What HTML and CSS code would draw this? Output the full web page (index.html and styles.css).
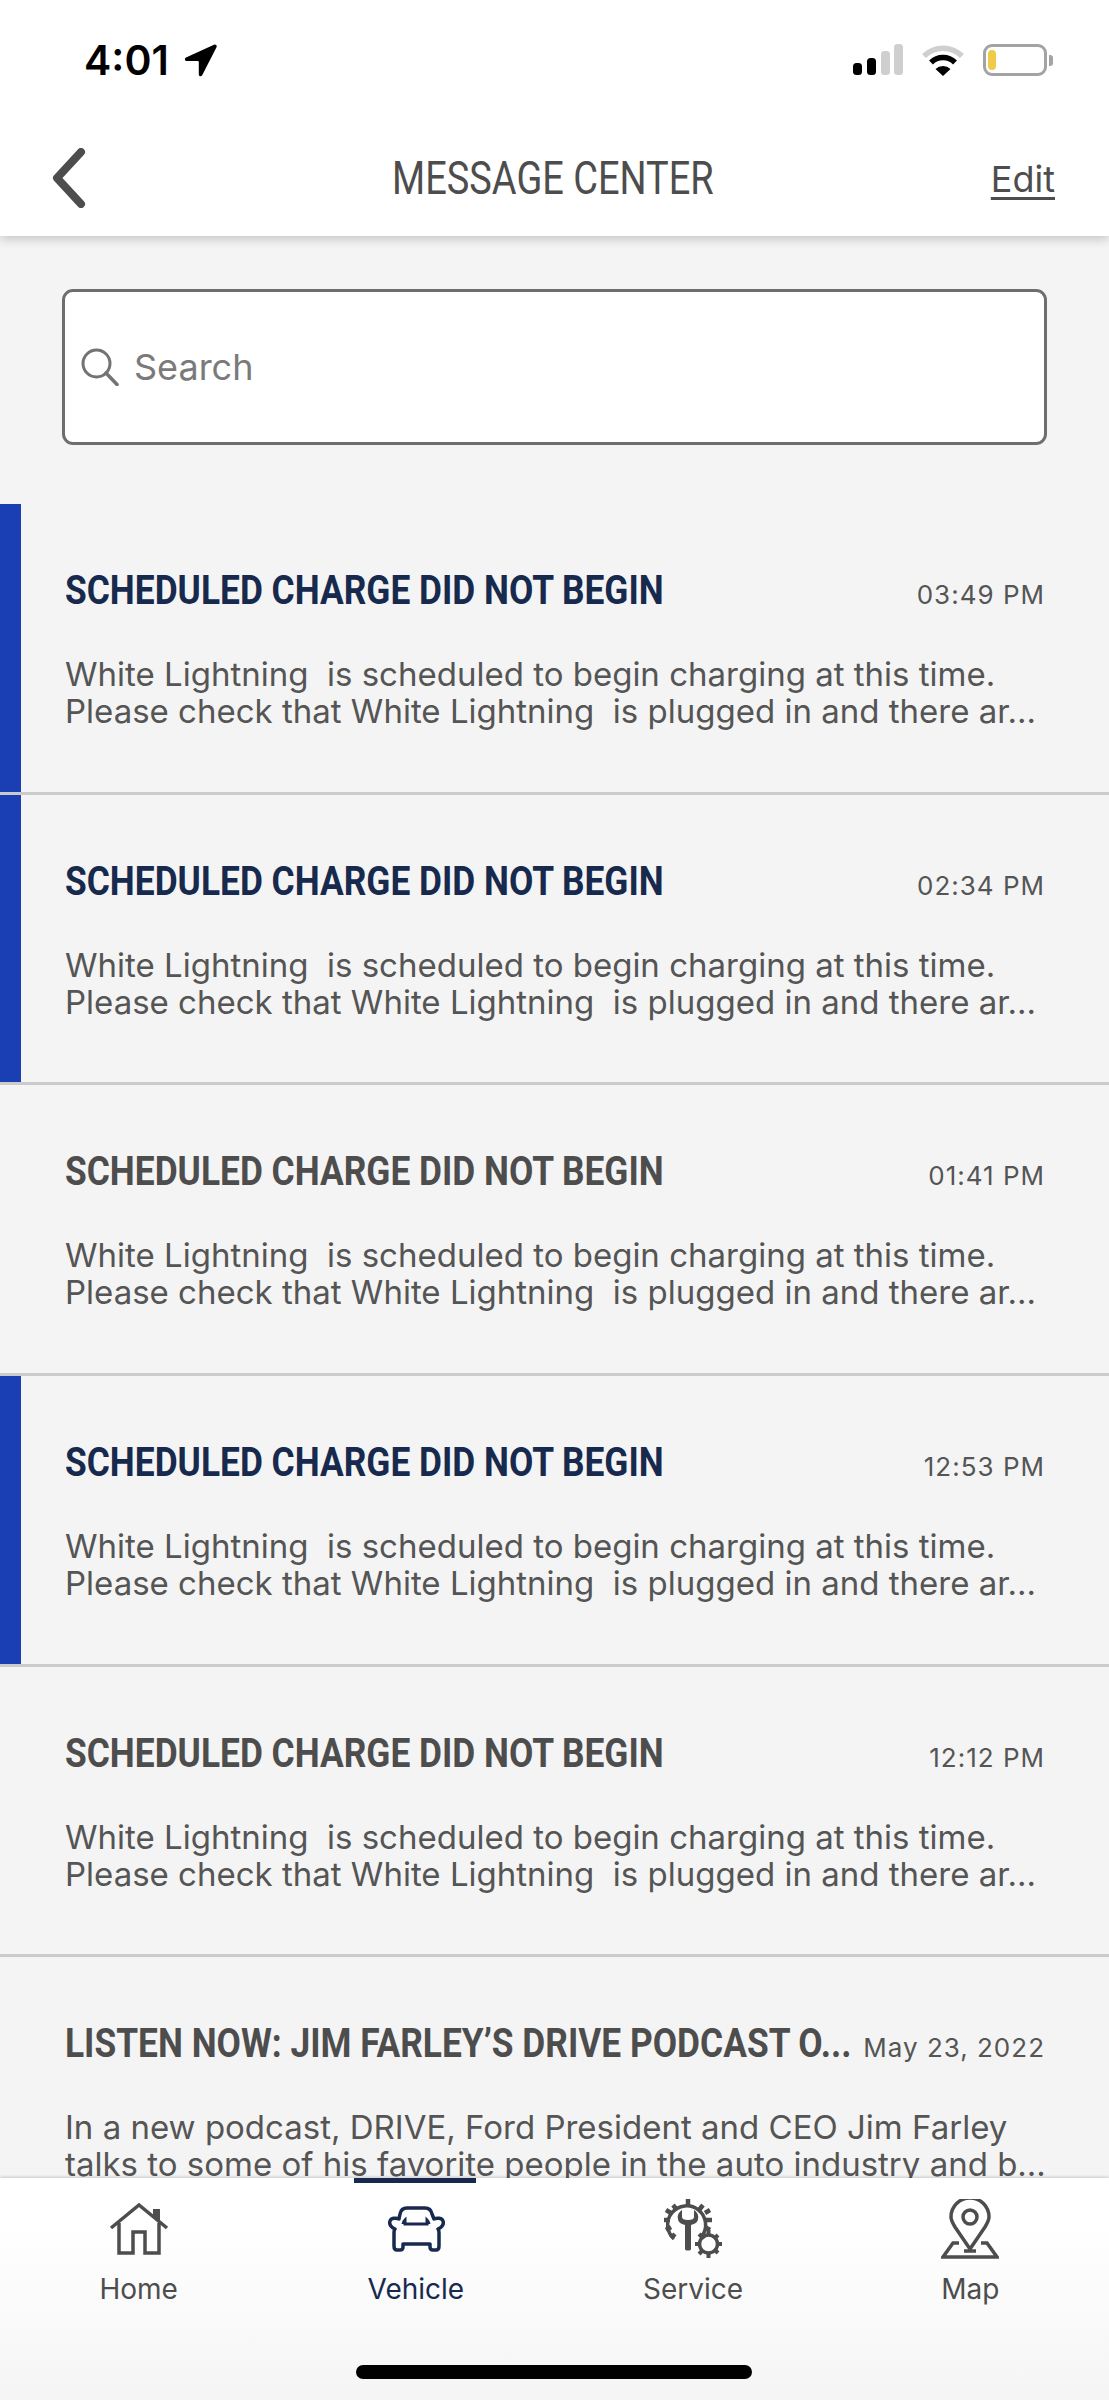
FILE: index.html
```html
<!DOCTYPE html>
<html lang="en">
<head>
<meta charset="utf-8">
<title>Message Center</title>
<link rel="stylesheet" href="styles.css">
</head>
<body>
<div class="app">
  <header class="top">
    <div class="status">
      <div class="clock">
        <span class="time">4:01</span>
        <svg class="arrow" width="33" height="33" viewBox="0 0 33 33"><path d="M30 .8 2 13.500c-1.800.8-1.200 3.500.8 3.500h10.700c.8 0 1.300.5 1.300 1.300v12.200c0 2 2.600 2.500 3.400.7L32.500 3.300C33.200 1.500 31.800 0 30 .8z" fill="#000"/></svg>
      </div>
      <div class="indicators">
        <svg width="50" height="32" viewBox="0 0 50 32"><rect x="0" y="19" width="9" height="12" rx="3.500" fill="#000"/><rect x="14" y="14" width="9" height="17" rx="3.500" fill="#000"/><rect x="28" y="7" width="9" height="24" rx="3.500" fill="#cfcfcf"/><rect x="41" y="0" width="9" height="31" rx="3.500" fill="#cfcfcf"/></svg>
        <svg width="44" height="33" viewBox="0 0 44 33"><path d="M3 12A27 27 0 0 1 41 12" fill="none" stroke="#cfcfcf" stroke-width="5.500"/><path d="M10 18.500A17 17 0 0 1 34 18.500" fill="none" stroke="#000" stroke-width="5.500"/><path d="M22 32 14.500 25A11 11 0 0 1 29.500 25z" fill="#000"/></svg>
        <div class="battery"><span class="charge"></span></div>
      </div>
    </div>
    <nav class="bar">
      <svg class="back" width="38" height="60" viewBox="0 0 38 60"><path d="M31 4 7 30l24 26" fill="none" stroke="#4d4d4d" stroke-width="8" stroke-linecap="round" stroke-linejoin="round"/></svg>
      <h1 class="title">MESSAGE CENTER</h1>
      <a class="edit">Edit</a>
    </nav>
  </header>

  <main class="content">
    <div class="search">
      <svg width="38" height="38" viewBox="0 0 38 38"><circle cx="15.500" cy="15.500" r="13.500" fill="none" stroke="#737373" stroke-width="3"/><path d="M25 25 36 36.500" stroke="#737373" stroke-width="3.500" stroke-linecap="round"/></svg>
      <span class="search-text">Search</span>
    </div>

    <ul class="messages">
      <li class="message unread">
        <div class="head"><span class="subject"><span class="subject-text">SCHEDULED CHARGE DID NOT BEGIN</span></span><span class="when">03:49 PM</span></div>
        <p class="line">White Lightning  is scheduled to begin charging at this time.</p>
        <p class="line">Please check that White Lightning  is plugged in and there ar...</p>
      </li>
      <li class="message unread">
        <div class="head"><span class="subject"><span class="subject-text">SCHEDULED CHARGE DID NOT BEGIN</span></span><span class="when">02:34 PM</span></div>
        <p class="line">White Lightning  is scheduled to begin charging at this time.</p>
        <p class="line">Please check that White Lightning  is plugged in and there ar...</p>
      </li>
      <li class="message">
        <div class="head"><span class="subject"><span class="subject-text">SCHEDULED CHARGE DID NOT BEGIN</span></span><span class="when">01:41 PM</span></div>
        <p class="line">White Lightning  is scheduled to begin charging at this time.</p>
        <p class="line">Please check that White Lightning  is plugged in and there ar...</p>
      </li>
      <li class="message unread">
        <div class="head"><span class="subject"><span class="subject-text">SCHEDULED CHARGE DID NOT BEGIN</span></span><span class="when">12:53 PM</span></div>
        <p class="line">White Lightning  is scheduled to begin charging at this time.</p>
        <p class="line">Please check that White Lightning  is plugged in and there ar...</p>
      </li>
      <li class="message">
        <div class="head"><span class="subject"><span class="subject-text">SCHEDULED CHARGE DID NOT BEGIN</span></span><span class="when">12:12 PM</span></div>
        <p class="line">White Lightning  is scheduled to begin charging at this time.</p>
        <p class="line">Please check that White Lightning  is plugged in and there ar...</p>
      </li>
      <li class="message">
        <div class="head"><span class="subject"><span class="subject-text">LISTEN NOW: JIM FARLEY’S DRIVE PODCAST O...</span></span><span class="when">May 23, 2022</span></div>
        <p class="line">In a new podcast, DRIVE, Ford President and CEO Jim Farley</p>
        <p class="line">talks to some of his favorite people in the auto industry and b...</p>
      </li>
    </ul>
  </main>

  <footer class="tabs">
    <div class="tab">
      <span class="tab-icon"><svg width="60" height="52" viewBox="0 0 60 52"><path d="M2 25 30 2l28 23" fill="none" stroke="#4d4d4d" stroke-width="3.500"/><path d="M44 13V6h7v13z" fill="#4d4d4d"/><path d="M10 20v30h14V29h12v21h14V20" fill="none" stroke="#4d4d4d" stroke-width="3.500"/></svg></span>
      <span class="tab-label">Home</span>
    </div>
    <div class="tab active">
      <span class="tab-icon"><svg width="60" height="46" viewBox="0 0 60 46"><path d="M14 8C15 3 18 2 21 2H39c3 0 6 1 7 6l2 5c3-1.500 8-1 9 2 1 3-1 6-5 8 1 1 1 2 1 4v13c0 3-1 4-3 4h-3c-2 0-3-1-3-3v-3H17v3c0 2-1 3-3 3h-3c-2 0-3-1-3-4V27c0-2 0-3 1-4-4-2-6-5-5-8 1-3 6-3.500 9-2z" fill="none" stroke="#172a4e" stroke-width="3.500" stroke-linejoin="round"/><path d="M17 18c0-2 1-3 2-4v4h22v-4c1 1 2 2 2 4" fill="none" stroke="#172a4e" stroke-width="3"/></svg></span>
      <span class="tab-label">Vehicle</span>
    </div>
    <div class="tab">
      <span class="tab-icon"><svg width="60" height="60" viewBox="0 0 60 60">
        <path d="M11 40A19 19 0 1 1 39 37" fill="none" stroke="#4d4d4d" stroke-width="3.500"/>
        <path d="M25 0v6M10 6l4 5M40 6l-4 5M1 21h6M43 21h6M3 11l5 3M47 11l-5 3M3 31l5-3M47 31l-5-3M8 39l4-4M42 39l-4-4" stroke="#4d4d4d" stroke-width="4.500"/>
        <path d="M19 11c-3 2-5 5-4 9 0 3 3 5 7 6v24c0 2 6 2 6 0V26c4-1 7-3 7-6 1-4-1-7-4-9v7c0 2-2 3-6 3s-6-1-6-3z" fill="#4d4d4d"/>
        <circle cx="45.500" cy="45" r="9" fill="none" stroke="#4d4d4d" stroke-width="3.500"/>
        <path d="M45.500 31v6M45.500 53v6M32 45h6M53 45h6M36 35l4 4M51 50l4 4M36 55l4-4M51 40l4-4" stroke="#4d4d4d" stroke-width="4"/>
      </svg></span>
      <span class="tab-label">Service</span>
    </div>
    <div class="tab">
      <span class="tab-icon"><svg width="58" height="60" viewBox="0 0 58 60">
        <path d="M29 50 14 28C11 23 10 20 10 18a18 18 0 0 1 38 0c0 2-1 5-4 10z" fill="none" stroke="#4d4d4d" stroke-width="3.500" stroke-linejoin="round"/>
        <circle cx="29" cy="18" r="7" fill="none" stroke="#4d4d4d" stroke-width="3.500"/>
        <path d="M18 44h-6L2 58h54L46 44h-6M23 52h12" fill="none" stroke="#4d4d4d" stroke-width="3.500"/>
      </svg></span>
      <span class="tab-label">Map</span>
    </div>
    <span class="tab-marker"></span>
    <span class="home-pill"></span>
  </footer>
</div>
</body>
</html>
```

FILE: styles.css
```css
* { box-sizing: border-box; }

html, body { margin: 0; padding: 0; }

body {
  font-family: Inter, "Liberation Sans", sans-serif;
  background: #f4f4f4;
}

.app {
  width: 1109px;
  height: 2400px;
  display: flex;
  flex-direction: column;
  overflow: hidden;
}

/* header with status line and navigation */
.top {
  height: 236px;
  flex: none;
  background: #fff;
  box-shadow: 0 3px 10px rgba(0, 0, 0, .2);
  position: relative;
  z-index: 2;
}

.status {
  height: 126px;
  padding: 44px 62px 0 84px;
  display: flex;
  justify-content: space-between;
  align-items: flex-start;
}

.clock { display: flex; align-items: center; gap: 15px; height: 32px; }

.time {
  font-weight: 600;
  font-size: 41px;
  line-height: 32px;
  color: #000;
}

.indicators { display: flex; align-items: flex-start; gap: 18px; }

.battery {
  width: 64px;
  height: 32px;
  border: 3px solid #a3a3a3;
  border-radius: 9px;
  padding: 3px 2px;
  position: relative;
}

.battery::after {
  content: "";
  position: absolute;
  right: -9px;
  top: 8px;
  width: 4px;
  height: 11px;
  background: #a3a3a3;
  border-radius: 0 3px 3px 0;
}

.charge {
  display: block;
  width: 8px;
  height: 100%;
  background: #f2c94a;
  border-radius: 4px;
}

.bar {
  height: 110px;
  padding: 0 54px 0 50px;
  display: grid;
  grid-template-columns: 1fr auto 1fr;
  align-items: center;
}

.back { margin-top: -6px; }

/* the brand type is condensed, so the available sans is narrowed horizontally */
.title {
  margin: -6px 0 0;
  font-family: Roboto, "Liberation Sans", sans-serif;
  font-weight: 400;
  font-size: 46px;
  color: #4d4d4d;
  white-space: nowrap;
  transform: scaleX(.825);
}

.edit {
  justify-self: end;
  margin-top: -4px;
  font-size: 36px;
  color: #4d4d4d;
  text-decoration: underline;
  text-underline-offset: 5px;
  text-decoration-thickness: 3px;
}

.content { flex: 1; min-height: 0; overflow: hidden; padding-top: 53px; }

.search {
  height: 156px;
  margin: 0 62px;
  padding: 0 16px;
  display: flex;
  align-items: center;
  gap: 15px;
  background: #fff;
  border: 3px solid #6e6e6e;
  border-radius: 11px;
}

.search-text { font-size: 36px; color: #7a7a7a; }

.messages { list-style: none; margin: 59px 0 0; padding: 0; }

.message {
  height: 290.700px;
  padding: 63px 64px 0 65px;
  border-bottom: 3px solid #cbcbcb;
  color: #4d4d4d;
}

.message.unread {
  box-shadow: inset 21px 0 0 #1a3eb4;
}

.head {
  display: flex;
  align-items: baseline;
  gap: 18px;
  margin-bottom: 41px;
}

.subject { flex: 1; min-width: 0; }

.subject-text {
  display: block;
  font-family: Roboto, "Liberation Sans", sans-serif;
  font-weight: 700;
  font-size: 40px;
  line-height: 48px;
  white-space: nowrap;
  transform: scaleX(.883);
  transform-origin: left center;
}

.unread .subject-text { color: #172a4e; }

.when { font-size: 26px; letter-spacing: 1px; color: #555; white-space: nowrap; }

.line {
  margin: 0;
  font-size: 33px;
  line-height: 37px;
  color: #555;
  white-space: pre;
}

/* bottom tabs */
.tabs {
  height: 222px;
  flex: none;
  display: grid;
  grid-template-columns: repeat(4, 1fr);
  align-content: start;
  padding-top: 21px;
  background: linear-gradient(#fff 20%, #f5f5f5);
  box-shadow: 0 -1px 3px rgba(0, 0, 0, .18);
  position: relative;
  z-index: 2;
}

.tab {
  display: flex;
  flex-direction: column;
  align-items: center;
  gap: 12px;
  color: #4d4d4d;
}

.tab.active { color: #172a4e; }

.tab-icon { height: 60px; display: flex; align-items: center; }

.tab-label { font-size: 28px; line-height: 36px; }

.tab-marker {
  position: absolute;
  left: 354px;
  top: 0;
  width: 122px;
  height: 5px;
  background: #172a4e;
}

.home-pill {
  position: absolute;
  left: 356px;
  top: 187px;
  width: 396px;
  height: 14px;
  background: #000;
  border-radius: 7px;
}
```
